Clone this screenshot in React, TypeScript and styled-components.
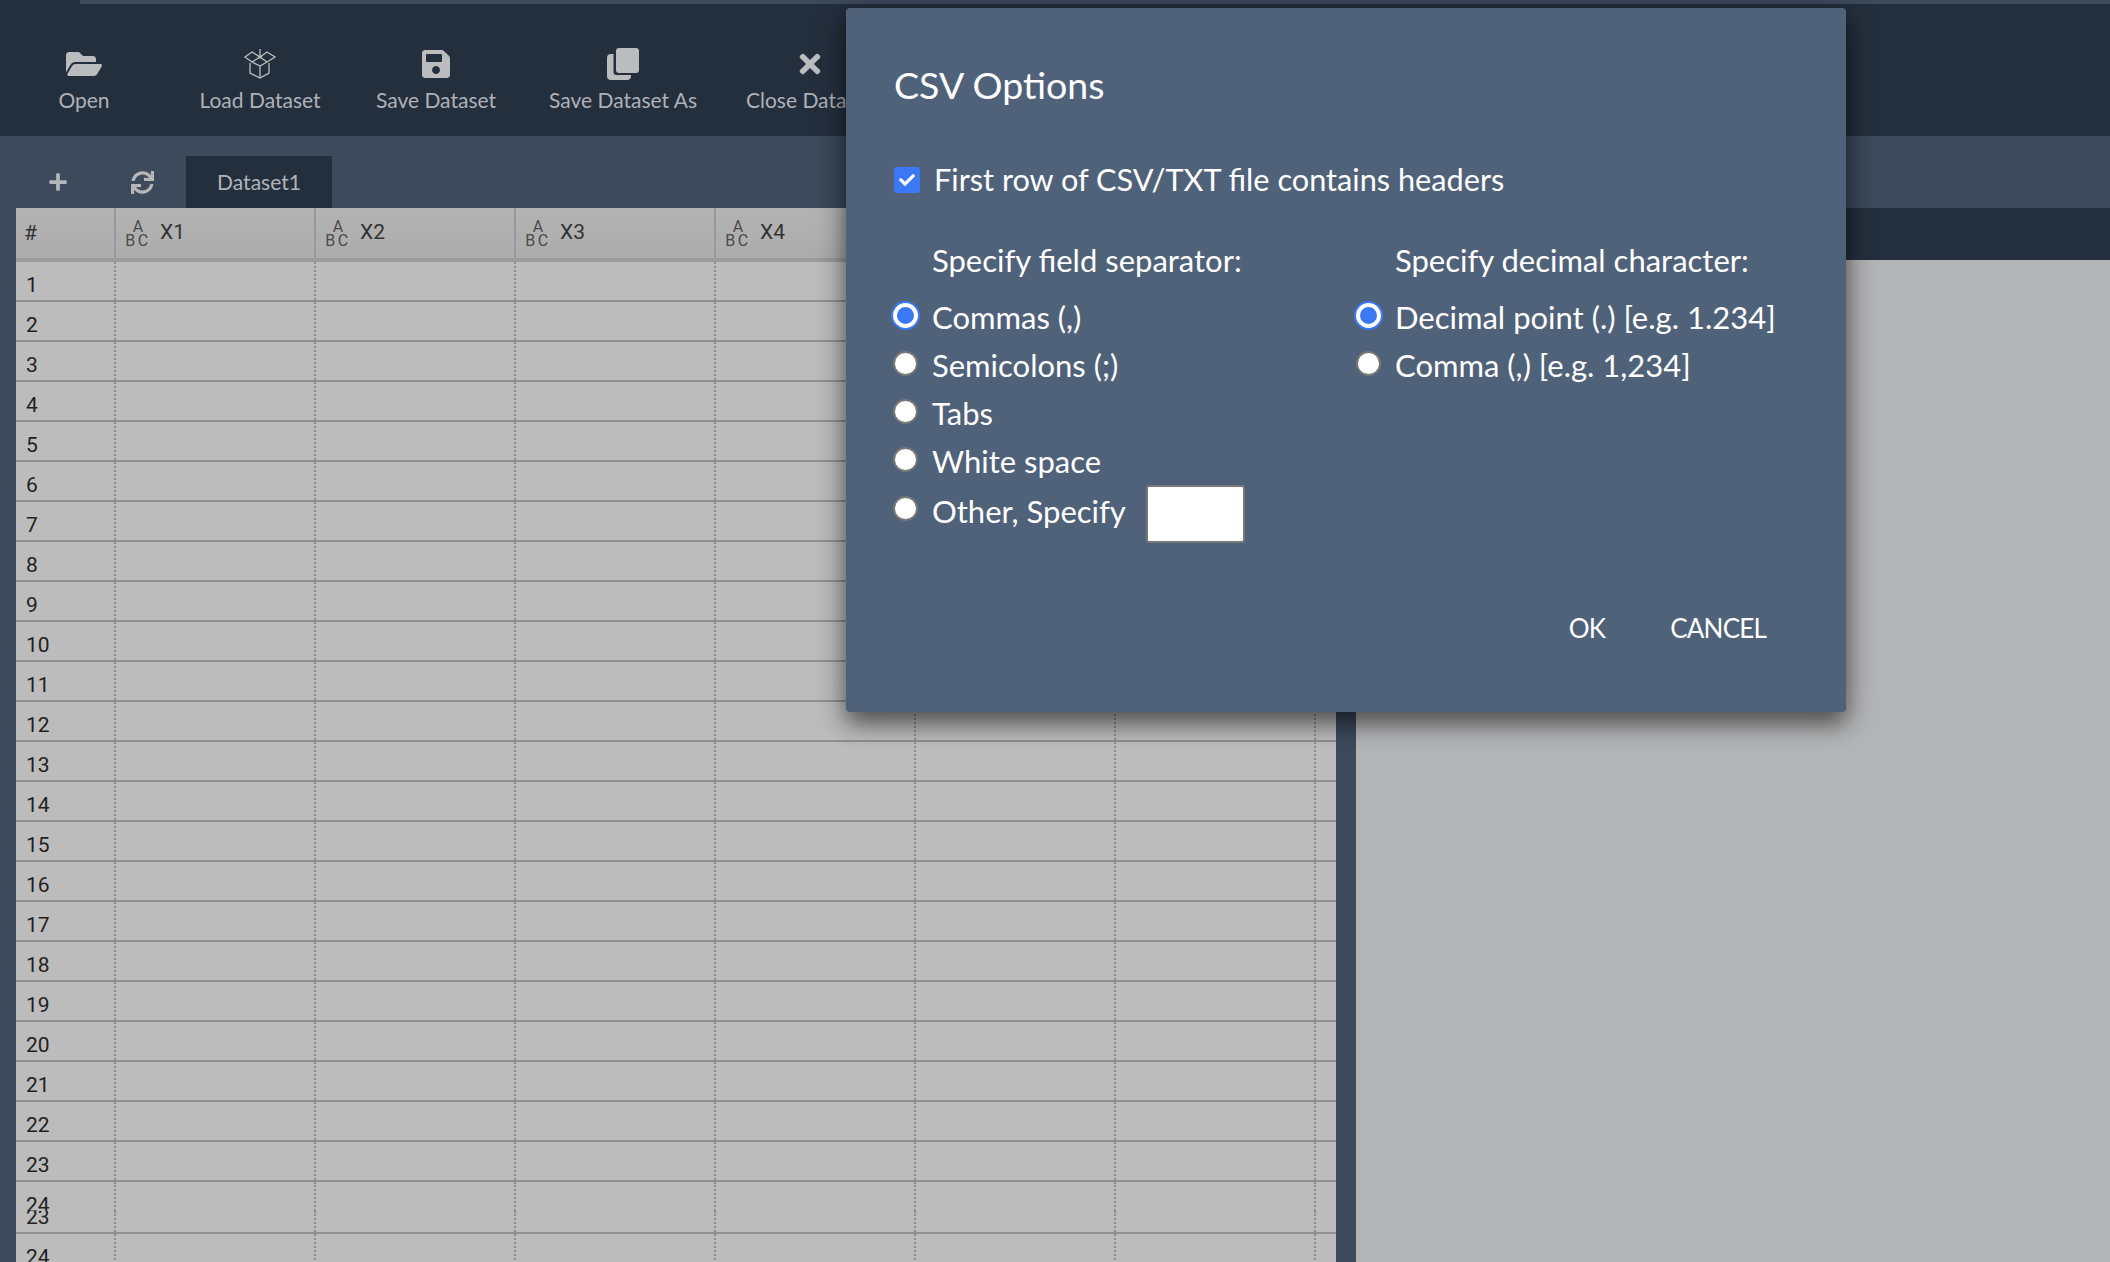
import styled, { createGlobalStyle } from 'styled-components';
import { FaFolderOpen, FaSave, FaTimes, FaPlus, FaSync, FaCheck } from 'react-icons/fa';

const UI_FONT = `'Lato', 'Noto Sans', sans-serif`;
const GRID_FONT = `'Roboto', 'Liberation Sans', sans-serif`;

const COLUMNS = ['X1', 'X2', 'X3', 'X4', 'X5', 'X6'];
const ROW_COUNT = 23;
const SEPARATORS = ['Commas (,)', 'Semicolons (;)', 'Tabs', 'White space'];

const BoxIcon = () => (
  <svg width="34" height="30" viewBox="0 0 34 30" fill="none" stroke="currentColor" strokeWidth="1.3">
    <path d="M17 0v9M15 7l2 2 2-2" />
    <path d="M2 8l7-5 8 5-8 5zM17 8l7-5 8 5-8 5z" />
    <path d="M9 13l8 4 7-4M7 14v10l10 5 9-5V14M17 17v12" />
  </svg>
);

const CloneIcon = () => (
  <svg width="32" height="32" viewBox="0 0 32 32" fill="currentColor">
    <rect x="9" y="0" width="23" height="25" rx="3" />
    <path d="M6.500 6H4a4 4 0 0 0-4 4v18a4 4 0 0 0 4 4h16a4 4 0 0 0 4-4v-1H9.500a3 3 0 0 1-3-3z" />
  </svg>
);

const TOOLS = [
  { label: 'Open', width: 168, icon: <FaFolderOpen size={36} /> },
  { label: 'Load Dataset', width: 184, icon: <BoxIcon /> },
  { label: 'Save Dataset', width: 168, icon: <FaSave size={32} /> },
  { label: 'Save Dataset As', width: 206, icon: <CloneIcon /> },
  { label: 'Close Dataset', width: 168, icon: <FaTimes size={30} /> },
];

export default function App() {
  const rows = Array.from({ length: ROW_COUNT }, (_, i) => i + 1);

  return (
    <Page>
      <GlobalStyle />
      <TopStrip>
        <TopStripCorner />
      </TopStrip>
      <Toolbar>
        {TOOLS.map((tool) => (
          <Tool key={tool.label} $width={tool.width}>
            <ToolIcon>{tool.icon}</ToolIcon>
            <ToolLabel>{tool.label}</ToolLabel>
          </Tool>
        ))}
      </Toolbar>
      <TabBar>
        <TabButton $width={63} $left={26}>
          <FaPlus size={20} />
        </TabButton>
        <TabButton $width={87} $left={10}>
          <FaSync size={23} />
        </TabButton>
        <Tab>Dataset1</Tab>
      </TabBar>
      <Workspace>
        <GridArea>
          <Grid>
            <HeaderRow>
              <IndexHeader>#</IndexHeader>
              {COLUMNS.map((name) => (
                <ColumnHeader key={name}>
                  <TypeIcon>
                    <span>A</span>
                    <span>BC</span>
                  </TypeIcon>
                  {name}
                </ColumnHeader>
              ))}
              <RestHeader />
            </HeaderRow>
            {rows.map((n) => (
              <GridRow key={n} n={n} />
            ))}
            {/* the stale repaint at the bottom of the grid */}
            <GridRow n={24} $height={29} $noLine />
            <GridRow n={23} $height={23} $shift={-17} />
            <GridRow n={24} />
          </Grid>
        </GridArea>
        <Gutter />
        <SidePanel>
          <SideHeader />
        </SidePanel>
      </Workspace>

      <Dialog>
        <DialogTitle>CSV Options</DialogTitle>
        <HeaderOption>
          <Checkbox>
            <FaCheck size={16} />
          </Checkbox>
          First row of CSV/TXT file contains headers
        </HeaderOption>
        <OptionColumns>
          <OptionColumn $width={463}>
            <GroupTitle>Specify field separator:</GroupTitle>
            {SEPARATORS.map((label, i) => (
              <RadioRow key={label}>
                <Radio $checked={i === 0} />
                {label}
              </RadioRow>
            ))}
            <RadioRow $tall>
              <Radio />
              Other, Specify
              <SpecifyInput />
            </RadioRow>
          </OptionColumn>
          <OptionColumn $width={440}>
            <GroupTitle>Specify decimal character:</GroupTitle>
            <RadioRow>
              <Radio $checked />
              Decimal point (.) [e.g. 1.234]
            </RadioRow>
            <RadioRow>
              <Radio />
              Comma (,) [e.g. 1,234]
            </RadioRow>
          </OptionColumn>
        </OptionColumns>
        <DialogActions>
          <ActionButton>OK</ActionButton>
          <ActionButton>CANCEL</ActionButton>
        </DialogActions>
      </Dialog>
    </Page>
  );
}

interface RowProps {
  n: number;
  $height?: number;
  $shift?: number;
  $noLine?: boolean;
}

const GridRow = ({ n, $height = 40, $shift = 0, $noLine }: RowProps) => (
  <Row $height={$height} $noLine={$noLine}>
    <IndexCell $shift={$shift}>{n}</IndexCell>
    {COLUMNS.map((name) => (
      <Cell key={name} />
    ))}
    <RestCell />
  </Row>
);

const GlobalStyle = createGlobalStyle`
  html,
  body {
    padding: 0;
    margin: 0;
    overflow: hidden;
    background: #b3b4b6;
  }

  * {
    box-sizing: border-box;
  }
`;

const Page = styled.div`
  position: relative;

  display: flex;
  flex-direction: column;

  width: 2110px;
  height: 1262px;

  overflow: hidden;

  font-family: ${UI_FONT};
`;

const TopStrip = styled.div`
  flex-shrink: 0;

  height: 4px;

  background: #3c4a5c;
`;

const TopStripCorner = styled.div`
  width: 80px;
  height: 4px;

  background: #242f3e;
`;

const Toolbar = styled.div`
  display: flex;
  flex-shrink: 0;

  height: 132px;

  background: #242f3e;
`;

const Tool = styled.div<{ $width: number }>`
  display: flex;
  flex-direction: column;
  flex-shrink: 0;

  align-items: center;

  width: ${({ $width }) => $width}px;
  padding-top: 44px;

  color: #bbbcbe;
`;

const ToolIcon = styled.div`
  display: flex;

  align-items: center;
  justify-content: center;

  height: 32px;
`;

const ToolLabel = styled.div`
  margin-top: 7px;

  font-size: 21px;
  line-height: 26px;
  white-space: nowrap;

  color: #aeb1b7;
`;

const TabBar = styled.div`
  display: flex;
  flex-shrink: 0;

  align-items: flex-end;

  height: 72px;

  background: #3c4a5c;
`;

const TabButton = styled.div<{ $width: number; $left: number }>`
  display: flex;

  align-items: center;
  justify-content: center;

  width: ${({ $width }) => $width}px;
  height: 52px;
  margin-left: ${({ $left }) => $left}px;

  color: #b4b6ba;
`;

const Tab = styled.div`
  display: flex;

  align-items: center;
  justify-content: center;

  width: 146px;
  height: 52px;
  padding-bottom: 2px;

  font-size: 21px;

  color: #b0b3b9;

  background: #242f3e;
`;

const Workspace = styled.div`
  display: flex;
  flex: 1;

  min-height: 0;
`;

const GridArea = styled.div`
  flex-shrink: 0;

  width: 1336px;
  padding-left: 16px;

  background: #3c4a5c;
`;

const Grid = styled.div`
  font-family: ${GRID_FONT};
  font-size: 21px;

  color: #222;

  background: #bbb;
`;

const HeaderRow = styled.div`
  display: flex;

  height: 54px;

  color: #333;

  background: linear-gradient(#b3b3b3 0%, #b0b0b0 50%, #ababab 100%);
  border-bottom: 4px solid #9b9b9b;
`;

const IndexHeader = styled.div`
  flex-shrink: 0;

  width: 98px;
  padding: 13px 0 0 8px;
`;

const ColumnHeader = styled.div`
  display: flex;
  flex-shrink: 0;

  gap: 9px;

  width: 200px;
  padding: 12px 0 0 9px;

  border-left: 2px solid #999;
`;

const RestHeader = styled.div`
  flex: 1;

  border-left: 2px solid #999;
`;

const TypeIcon = styled.div`
  display: flex;
  flex-direction: column;

  align-items: center;

  width: 26px;

  font-size: 16px;
  line-height: 14px;

  color: #4a4a4a;

  span:last-child {
    letter-spacing: 2.500px;
  }
`;

const Row = styled.div<{ $height: number; $noLine?: boolean }>`
  display: flex;

  height: ${({ $height }) => $height}px;

  overflow: hidden;

  background: #bcbcbc;
  border-bottom: ${({ $noLine }) => ($noLine ? '0' : '2px solid #8f8f8f')};
`;

const IndexCell = styled.div<{ $shift: number }>`
  flex-shrink: 0;

  width: 98px;
  padding: 11px 0 0 10px;
  margin-top: ${({ $shift }) => $shift}px;

  line-height: 25px;
`;

const Cell = styled.div`
  flex-shrink: 0;

  width: 200px;

  border-left: 2px dotted #8c8c8c;
`;

const RestCell = styled.div`
  flex: 1;

  border-left: 2px dotted #8c8c8c;
`;

const Gutter = styled.div`
  flex-shrink: 0;

  width: 20px;

  background: #3c4a5c;
`;

const SidePanel = styled.div`
  flex: 1;

  background: #b3b4b6;
`;

const SideHeader = styled.div`
  height: 52px;

  background: #242f3e;
`;

const Dialog = styled.div`
  position: absolute;
  top: 8px;
  left: 846px;

  display: flex;
  flex-direction: column;

  width: 1000px;
  height: 704px;
  padding: 0 48px;

  color: #fff;

  background: #506279;
  border-radius: 4px;
  box-shadow:
    0 12px 22px rgb(0 0 0 / 45%),
    0 4px 34px rgb(0 0 0 / 25%);
`;

const DialogTitle = styled.div`
  padding-top: 52px;

  font-size: 37.500px;
  line-height: 50px;
`;

const HeaderOption = styled.div`
  display: flex;

  gap: 14px;
  align-items: center;

  margin-top: 50px;

  font-size: 30.700px;
  line-height: 40px;
`;

const Checkbox = styled.div`
  display: flex;

  align-items: center;
  justify-content: center;

  width: 26px;
  height: 26px;

  background: #3b78f6;
  border-radius: 3px;
`;

const OptionColumns = styled.div`
  display: flex;

  margin-top: 40px;
`;

const OptionColumn = styled.div<{ $width: number }>`
  display: flex;
  flex-direction: column;

  width: ${({ $width }) => $width}px;
`;

const GroupTitle = styled.div`
  padding-left: 38px;
  margin-bottom: 13px;

  font-size: 31px;
  line-height: 40px;
`;

const RadioRow = styled.div<{ $tall?: boolean }>`
  display: flex;

  gap: 14px;
  align-items: center;

  height: ${({ $tall }) => ($tall ? 51 : 48)}px;
  margin-left: -1px;

  font-size: 31px;
  white-space: nowrap;
`;

const Radio = styled.div<{ $checked?: boolean }>`
  flex-shrink: 0;

  width: 25px;
  height: 25px;
  margin-bottom: 4px;

  background: ${({ $checked }) => ($checked ? '#3b78f6' : '#fff')};
  border: ${({ $checked }) => ($checked ? '4px solid #fff' : '2px solid #787878')};
  border-radius: 50%;
  box-shadow: ${({ $checked }) => ($checked ? '0 0 0 2px #3b78f6' : 'none')};
`;

const SpecifyInput = styled.div`
  flex-shrink: 0;

  width: 99px;
  height: 58px;
  margin-top: 6px;
  margin-left: 6px;

  background: #fff;
  border: 2px solid #787878;
  border-radius: 3px;
`;

const DialogActions = styled.div`
  display: flex;

  gap: 65px;
  justify-content: flex-end;

  padding-right: 32px;
  margin-top: 72px;
`;

const ActionButton = styled.div`
  font-size: 26px;
  line-height: 40px;
  letter-spacing: -0.800px;
`;
